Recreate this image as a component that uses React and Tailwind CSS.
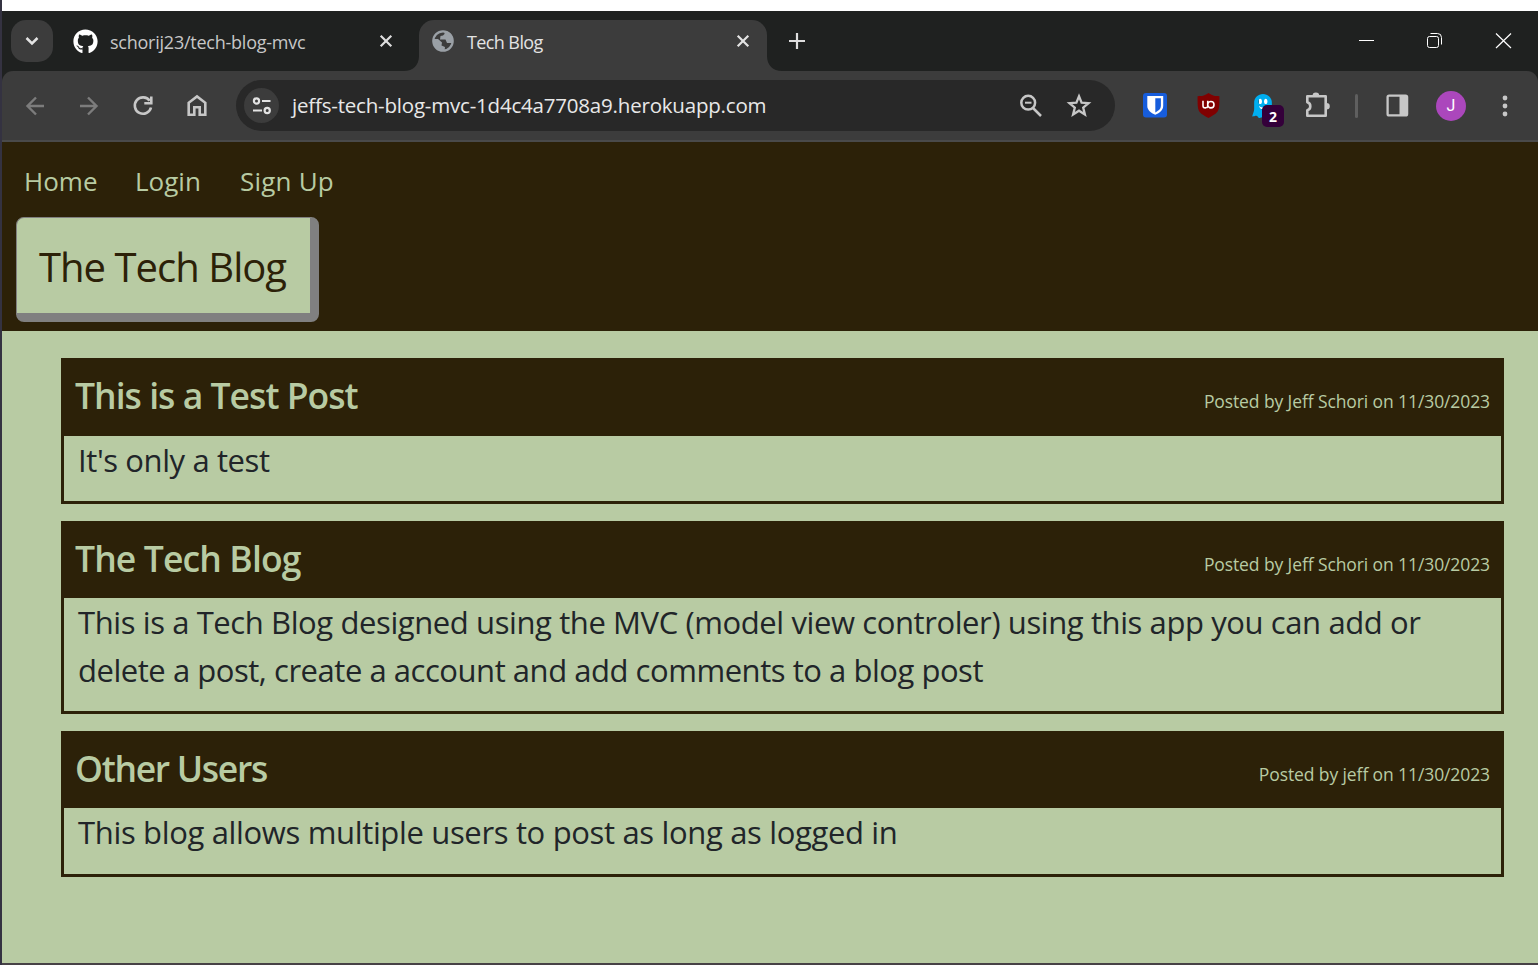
import React from "react";
import { FaGithub } from "react-icons/fa";
import { SiUblockorigin, SiGhostery } from "react-icons/si";

const posts = [
  {
    title: "This is a Test Post",
    titleClass: "tracking-[-0.97px]",
    meta: "Posted by Jeff Schori on 11/30/2023",
    lines: [{ text: "It's only a test", className: "tracking-[-0.4px]" }],
    headClass: "h-[78px]",
    bodyClass: "h-[68px]",
  },
  {
    title: "The Tech Blog",
    titleClass: "tracking-[-0.87px]",
    meta: "Posted by Jeff Schori on 11/30/2023",
    lines: [
      {
        text: "This is a Tech Blog designed using the MVC (model view controler) using this app you can add or",
        className: "tracking-[-0.4px]",
      },
      {
        text: "delete a post, create a account and add comments to a blog post",
        className: "tracking-[-0.46px]",
      },
    ],
    headClass: "h-[77px]",
    bodyClass: "h-[116px]",
  },
  {
    title: "Other Users",
    titleClass: "tracking-[-1.3px]",
    meta: "Posted by jeff on 11/30/2023",
    lines: [
      {
        text: "This blog allows multiple users to post as long as logged in",
        className: "tracking-[-0.34px]",
      },
    ],
    headClass: "h-[77px]",
    bodyClass: "h-[69px]",
  },
];

function Icon({ w = 24, h = 24, className = "", sw = 2.4, children }) {
  return (
    <svg
      width={w}
      height={h}
      viewBox={`0 0 ${w} ${h}`}
      fill="none"
      stroke="currentColor"
      strokeWidth={sw}
      className={`shrink-0 ${className}`}
    >
      {children}
    </svg>
  );
}

function CloseIcon({ className }) {
  return (
    <Icon w={14} h={14} sw={2.2} className={className}>
      <path d="M1.7 1.7 12.3 12.3M12.3 1.7 1.7 12.3" />
    </Icon>
  );
}

function TabStrip() {
  return (
    <div className="flex h-[60px] bg-[#1f2120] pl-[9px]">
      <button className="mt-[9px] flex size-[42px] items-center justify-center rounded-[15px] bg-[#3c3c3c] text-[#e3e3e3]">
        <Icon w={14} h={10} sw={2.5}>
          <path d="M1.5 2 7 7.5 12.5 2" />
        </Icon>
      </button>

      <div className="flex h-full w-[351px] items-center pl-[20px] text-[#c7c7c7]">
        <FaGithub size={25} className="shrink-0 text-white" />
        <span className="ml-[12px] w-[269px] pt-[3px] text-[18px] tracking-[-0.24px]">schorij23/tech-blog-mvc</span>
        <CloseIcon className="text-[#dedede]" />
      </div>

      <Icon w={15} h={15} className="mt-[45px] stroke-none text-[#3c3c3c]">
        <path d="M15 0v15H0C9 15 15 9 15 0Z" fill="currentColor" />
      </Icon>
      <div className="mt-[9px] flex h-[51px] w-[348px] items-start rounded-t-[15px] bg-[#3c3c3c] pl-[13px] text-[#e3e3e3]">
        <Icon w={22} h={22} className="mt-[10px] text-[#9aa0a6]" sw={2.2}>
          <circle cx="11" cy="11" r="9.7" />
          <path
            stroke="none"
            fill="currentColor"
            d="M12.5 1v3L11 5.500 8.500 6 8 9.500h5.500L15 13h5.500C22 6 18 1.500 12.500 1ZM1 9h5l4 3.500-.5 3 3.500 1.500-.5 4C5 21 0 16 1 9Z"
          />
        </Icon>
        <span className="ml-[13px] mt-[8px] w-[269px] text-[18px] leading-[28px] tracking-[-0.6px]">Tech Blog</span>
        <CloseIcon className="mt-[14px]" />
      </div>
      <Icon w={15} h={15} className="mt-[45px] stroke-none text-[#3c3c3c]">
        <path d="M0 0v15h15C6 15 0 9 0 0Z" fill="currentColor" />
      </Icon>
      <Icon w={16} h={16} className="ml-[7px] mt-[22px] text-[#dedede]" sw={2.2}>
        <path d="M8 0v16M0 8h16" />
      </Icon>

      <div className="ml-auto flex pr-[26px] pt-[21px] text-white">
        <Icon w={17} h={17} sw={1}>
          <path d="M1 8.500h15" />
        </Icon>
        <Icon w={17} h={17} sw={1} className="ml-[51px]">
          <rect x="1.500" y="4.500" width="11" height="11" rx="2" />
          <path d="M4.500 1.500h7a4 4 0 0 1 4 4v7" />
        </Icon>
        <Icon w={17} h={17} sw={1.2} className="ml-[52px]">
          <path d="M1 1.500 16 16M16 1.500 1 16" />
        </Icon>
      </div>
    </div>
  );
}

function Toolbar() {
  return (
    <div className="bg-[#1f2120]">
      <div className="flex h-[71px] items-center rounded-t-[11px] border-b-2 border-[#4a4a4a] bg-[#3c3c3c] pl-[22px] text-[#c7c7c7]">
        <Icon className="text-[#7c7c7c]">
          <path d="M20 12H4M12 3.500 3.500 12l8.500 8.500" />
        </Icon>
        <Icon className="ml-[30px] text-[#7c7c7c]">
          <path d="M2 12h16M10 3.500 18.500 12 10 20.500" />
        </Icon>
        <Icon className="ml-[29px]" sw={2.6}>
          <path d="M18.700 6.800A8.200 8.200 0 1 0 20 13.500" />
          <path d="M20.300 2.500v6.800h-7" />
        </Icon>
        <Icon className="ml-[30px]" sw={2.6}>
          <path d="M3.700 20.800V8.800L12 2.500l8.300 6.300v12h-5.600v-7.500H9.300v7.500Z" />
        </Icon>

        <div className="ml-[27px] flex h-[51px] w-[879px] items-center rounded-full bg-[#282828] pl-[8px]">
          <div className="flex size-[35px] shrink-0 items-center justify-center rounded-full bg-[#3c3c3c] text-[#e3e3e3]">
            <Icon w={20} h={18} sw={2.2}>
              <circle cx="4.500" cy="4" r="2.600" />
              <path d="M10 4h8.500M1 13.500h9" />
              <circle cx="15.200" cy="13.500" r="2.600" />
            </Icon>
          </div>
          <span className="ml-[13px] w-[727px] whitespace-nowrap text-[20.5px] tracking-[-0.2px] text-[#e8e8e8]">
            jeffs-tech-blog-mvc-1d4c4a7708a9.herokuapp.com
          </span>
          <Icon sw={2.5}>
            <circle cx="9.200" cy="8.700" r="6.900" />
            <path d="M14 14l8 8" />
            <path d="M6 8.700h6.500" strokeWidth="2" />
          </Icon>
          <Icon w={26} h={26} className="ml-[23px]" sw={2.3}>
            <path d="M13 3.300l2.600 6.400 6.900.5-5.300 4.400 1.700 6.800L13 17.700l-5.900 3.700 1.700-6.800-5.300-4.400 6.900-.5Z" />
          </Icon>
        </div>

        <Icon w={24} h={25} className="ml-[28px] stroke-none">
          <rect width="24" height="24.500" rx="3" fill="#175ddc" />
          <path d="M4.300 3h15.900v10c0 4-3.500 6.800-7.950 8.800C7.800 19.800 4.300 17 4.300 13Z" fill="#fff" />
          <path d="M12.300 5.200h5.600V13c0 2.800-2.400 4.800-5.600 6.400Z" fill="#175ddc" />
        </Icon>
        <div className="relative ml-[29px] flex size-[25px] items-center justify-center">
          <div className="absolute left-[5px] top-[6px] h-[10px] w-[15px] bg-white" />
          <SiUblockorigin size={25} className="relative text-[#800000]" />
        </div>
        <div className="relative ml-[32px] h-[24px] w-[20px]">
          <div className="absolute left-[6px] top-[4px] h-[11px] w-[9px] bg-white" />
          <SiGhostery size={24} className="relative -left-[2px] text-[#00aef0]" />
          <span className="absolute left-[9px] top-[11px] flex h-[22px] w-[22px] items-center justify-center rounded-[5px] bg-[#34003a] pt-[2px] text-[14px] font-bold leading-none text-white">
            2
          </span>
        </div>
        <Icon w={27} h={27} className="ml-[31px]" sw={2.6}>
          <path strokeLinejoin="round" d="M3.300 4.300h18.400v19.500H3.300v-5.500c4-1 4-7 0-8Z" />
          <path stroke="none" fill="currentColor" d="M8.500 4a3.400 3.400 0 0 1 6.800 0ZM22.500 11a3.300 3.300 0 0 1 0 6.600Z" />
        </Icon>
        <div className="ml-[24px] h-[24px] w-[3px] rounded-full bg-[#5f5f5f]" />
        <Icon w={23} h={23} className="ml-[28px]" sw={2.3}>
          <rect x="1.600" y="1.600" width="19.500" height="19.800" rx="1.500" />
          <path stroke="none" fill="currentColor" d="M13.500 1.500H21v20h-7.500z" />
        </Icon>
        <span className="ml-[27px] flex size-[30px] shrink-0 items-center justify-center rounded-full bg-[#ab47bc] font-[Roboto,sans-serif] text-[16px] text-white">
          J
        </span>
        <Icon w={6} h={24} className="ml-[36px] stroke-none">
          <g fill="currentColor">
            <circle cx="3" cy="4" r="2.400" />
            <circle cx="3" cy="12" r="2.400" />
            <circle cx="3" cy="20" r="2.400" />
          </g>
        </Icon>
      </div>
    </div>
  );
}

function Post({ post }) {
  return (
    <article>
      <header className={`flex items-baseline justify-between bg-[#2c2108] px-[14px] pt-[11px] text-[#b8cba3] ${post.headClass}`}>
        <h2 className={`text-[35.5px] font-semibold leading-[52px] ${post.titleClass}`}>{post.title}</h2>
        <span className="relative -top-px text-[17.5px] tracking-[-0.1px]">{post.meta}</span>
      </header>
      <div className={`border-[3px] border-t-0 border-[#2c2108] pl-[14px] text-[31px] leading-[48px] text-[#212529] ${post.bodyClass}`}>
        {post.lines.map((line) => (
          <p key={line.text} className={`whitespace-nowrap ${line.className}`}>
            {line.text}
          </p>
        ))}
      </div>
    </article>
  );
}

export default function App() {
  return (
    <div className="flex h-[965px] w-[1538px] overflow-hidden bg-[#343241] font-['Open_Sans','Noto_Sans',sans-serif]">
      <div className="ml-[2px] flex w-[1536px] flex-col border-b-2 border-[#474246] bg-[#b8cba3]">
        <div className="h-[11px] bg-white" />
        <TabStrip />
        <Toolbar />
        <div className="h-[189px] bg-[#2c2108] pl-[14px] pt-[19px]">
          <nav className="flex pl-[8px] text-[26px] leading-[40px] text-[#b8cba3]">
            <a className="w-[111px]">Home</a>
            <a className="w-[105px]">Login</a>
            <a className="tracking-[0.2px]">Sign Up</a>
          </nav>
          <h1 className="mt-[16px] h-[105px] w-[303px] rounded-[8px] border border-b-[9px] border-r-[9px] border-[#808080] bg-[#b8cba3] pl-[22px] pt-px text-[40px] leading-[95px] tracking-[-0.97px] text-[#2c2108]">
            The Tech Blog
          </h1>
        </div>
        <main className="ml-[59px] mt-[27px] flex w-[1443px] flex-col gap-[17px]">
          {posts.map((post) => (
            <Post key={post.title} post={post} />
          ))}
        </main>
      </div>
    </div>
  );
}
